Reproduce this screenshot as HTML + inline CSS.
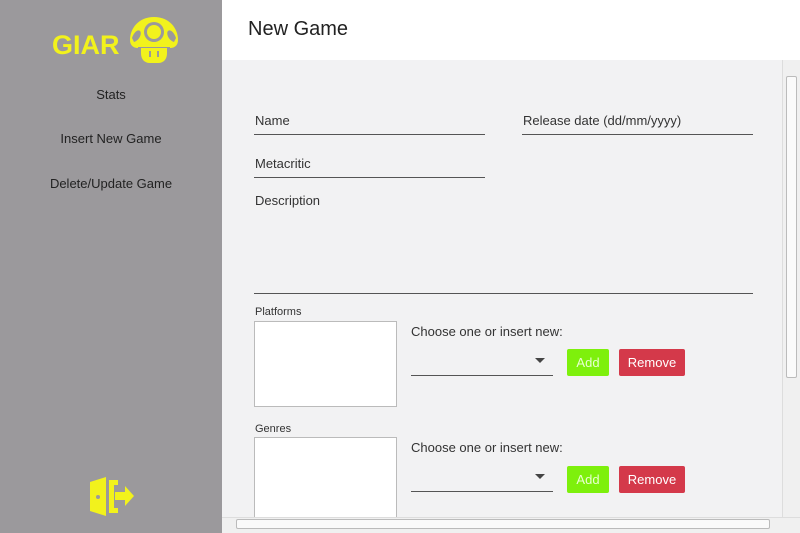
<!DOCTYPE html>
<html><head><style>
*{margin:0;padding:0;box-sizing:border-box}
body{width:800px;height:533px;overflow:hidden;font-family:"Liberation Sans",sans-serif;position:relative;background:#f2f2f3;color:#333}
.side{position:absolute;left:0;top:0;width:222px;height:533px;background:#9b999c}
.logo{position:absolute;left:52px;top:30px;font-size:27px;font-weight:bold;color:#f2f21c}
.nav{position:absolute;width:222px;text-align:center;font-size:13px;color:#222}
.head{position:absolute;left:222px;top:0;width:578px;height:60px;background:#fff}
.head span{position:absolute;left:26px;top:18px;font-size:20px;color:#222}
.t{position:absolute;font-size:13px;color:#333}
.ln{position:absolute;height:1px;background:#555}
.box{position:absolute;background:#fff;border:1px solid #bbb}
.btn{position:absolute;height:27px;border-radius:2px;color:#fff;font-size:13px;text-align:center;line-height:27px}
.add{background:#7ef00c;width:42px;color:#e8ffd0}
.rem{background:#d4394a;width:66px}
.arr{position:absolute;width:0;height:0;border-left:5px solid transparent;border-right:5px solid transparent;border-top:5px solid #444}
</style></head><body>
<div class="side">
<div class="logo">GIAR</div>
<svg style="position:absolute;left:128px;top:16px" width="52" height="54" viewBox="0 0 52 54">
<path d="M26 1C11 1 2 12 2 24c0 5 3 8 8 8h32c5 0 8-3 8-8C50 12 41 1 26 1z" fill="#f2f21c"/>
<circle cx="26" cy="16" r="10" fill="#9b999c"/><circle cx="26" cy="16" r="7" fill="#f2f21c"/>
<path d="M4 22c2-6 6-9 8-7s0 9-6 11z M48 22c-2-6-6-9-8-7s0 9 6 11z" fill="#9b999c"/>
<path d="M10 31h32v6c0 8-5 13-12 13H22c-7 0-12-5-12-13z" fill="#9b999c"/>
<path d="M13 32h26v5c0 6-3 10-9 10h-8c-6 0-9-4-9-10z" fill="#f2f21c"/>
<rect x="21" y="35" width="2" height="6" fill="#9b999c"/><rect x="29" y="35" width="2" height="6" fill="#9b999c"/>
</svg>
<div class="nav" style="top:87px">Stats</div>
<div class="nav" style="top:131px">Insert New Game</div>
<div class="nav" style="top:176px">Delete/Update Game</div>
<svg style="position:absolute;left:88px;top:474px" width="48" height="44" viewBox="0 0 48 44">
<path d="M2 8L18 3v39L2 37z" fill="#f2f21c"/><circle cx="10" cy="23" r="2" fill="#9b999c"/>
<path d="M21 6h9v5h-4v23h4v5h-9z" fill="#f2f21c"/>
<path d="M27 18h10v-6l9 10-9 10v-6H27z" fill="#f2f21c"/>
</svg>
</div>
<div class="head"><span>New Game</span></div>
<div class="t" style="left:255px;top:113px">Name</div><div class="ln" style="left:254px;top:134px;width:231px"></div>
<div class="t" style="left:523px;top:113px">Release date (dd/mm/yyyy)</div><div class="ln" style="left:522px;top:134px;width:231px"></div>
<div class="t" style="left:255px;top:156px">Metacritic</div><div class="ln" style="left:254px;top:177px;width:231px"></div>
<div class="t" style="left:255px;top:193px">Description</div><div class="ln" style="left:254px;top:293px;width:499px"></div>
<div class="t" style="left:255px;top:306px;font-size:11px">Platforms</div>
<div class="box" style="left:254px;top:321px;width:143px;height:86px"></div>
<div class="t" style="left:411px;top:324px">Choose one or insert new:</div>
<div class="arr" style="left:535px;top:358px"></div><div class="ln" style="left:411px;top:375px;width:142px"></div>
<div class="btn add" style="left:567px;top:349px">Add</div><div class="btn rem" style="left:619px;top:349px">Remove</div>
<div class="t" style="left:255px;top:423px;font-size:11px">Genres</div>
<div class="box" style="left:254px;top:437px;width:143px;height:90px"></div>
<div class="t" style="left:411px;top:440px">Choose one or insert new:</div>
<div class="arr" style="left:535px;top:474px"></div><div class="ln" style="left:411px;top:491px;width:142px"></div>
<div class="btn add" style="left:567px;top:466px">Add</div><div class="btn rem" style="left:619px;top:466px">Remove</div>
<div style="position:absolute;left:782px;top:60px;width:18px;height:457px;background:#f0f0f0;border-left:1px solid #ddd"></div>
<div style="position:absolute;left:786px;top:76px;width:11px;height:302px;background:#fafafa;border:1px solid #bbb;border-radius:2px"></div>
<div style="position:absolute;left:222px;top:517px;width:578px;height:16px;background:#f0f0f0;border-top:1px solid #ddd"></div>
<div style="position:absolute;left:236px;top:519px;width:534px;height:10px;background:#fafafa;border:1px solid #bbb;border-radius:2px"></div>
</body></html>
